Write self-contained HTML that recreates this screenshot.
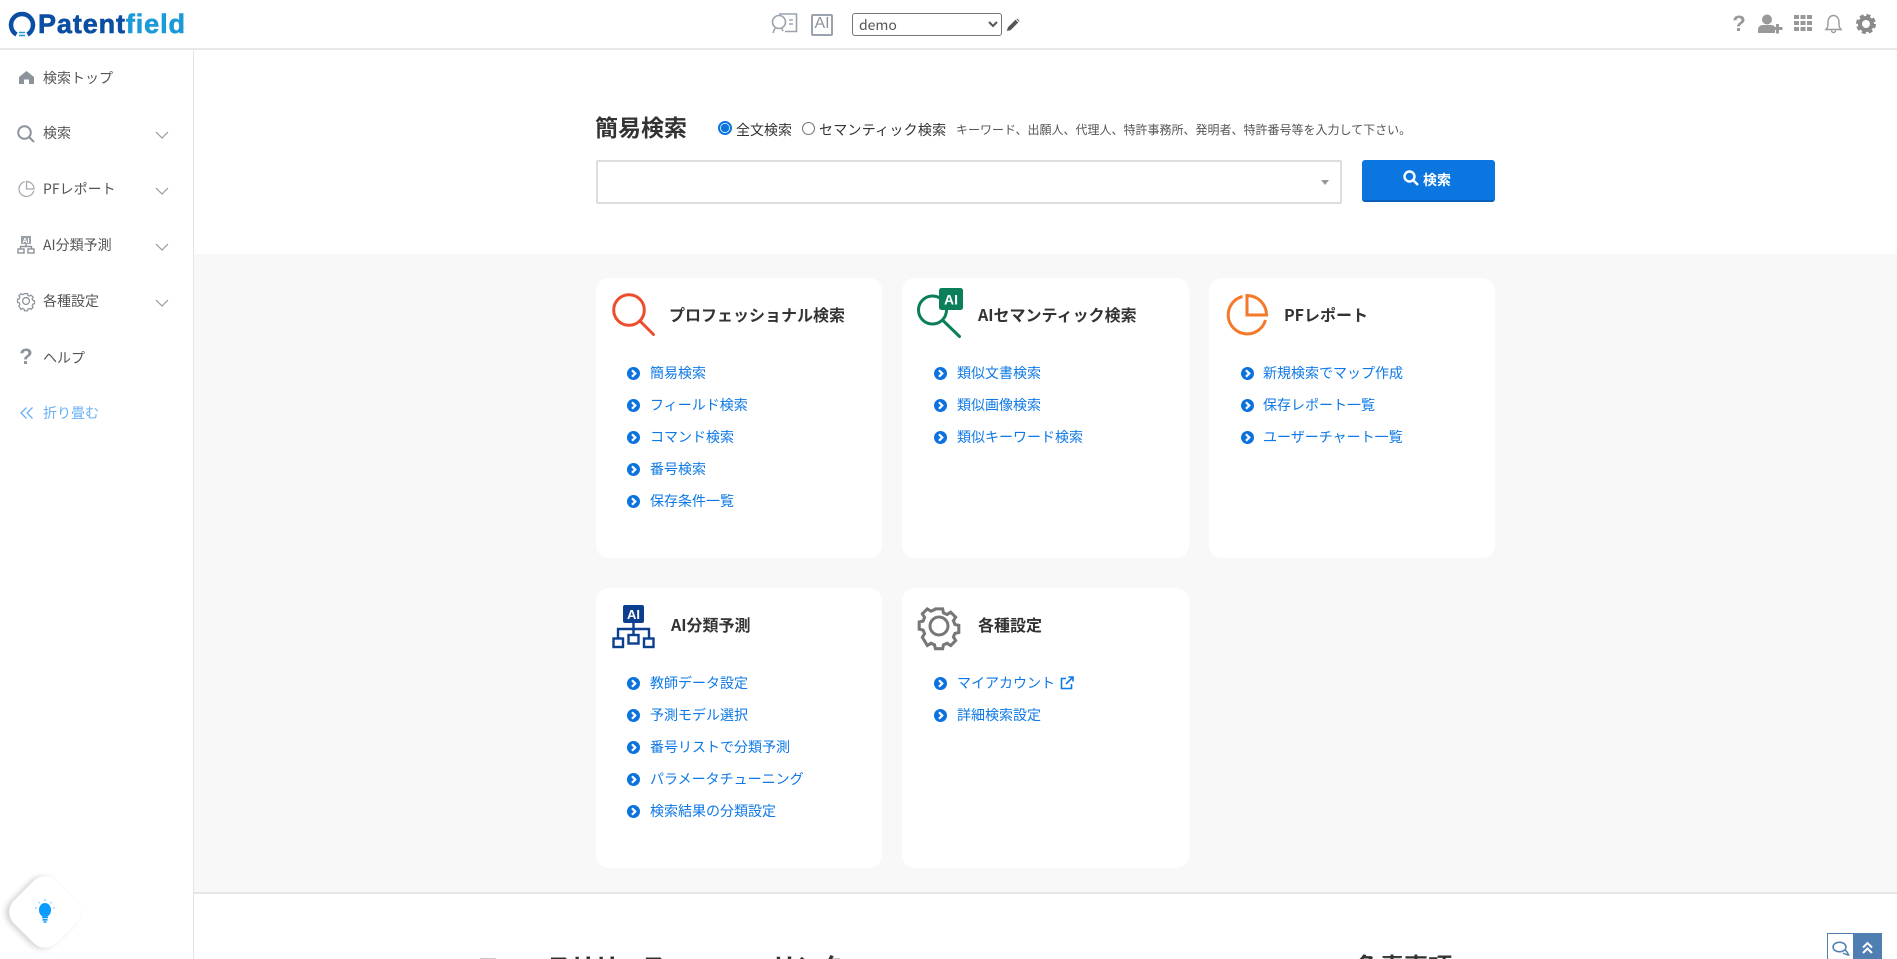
<!DOCTYPE html>
<html lang="ja">
<head>
<meta charset="utf-8">
<title>Patentfield</title>
<style>
html,body{margin:0;padding:0;width:1897px;height:959px;overflow:hidden;background:#fff}
body{position:relative;font-family:"Noto Sans CJK JP","Liberation Sans",sans-serif;color:#333}
.a{position:absolute}
.t{position:absolute;white-space:nowrap;line-height:20px;height:20px}
.nav{font-size:14px;color:#555;left:43px}
.card{position:absolute;background:#fff;border-radius:13px;width:286px;height:280px}
.h{font-size:16px;font-weight:700;color:#333}
.l{font-size:14px;color:#0d78e6}
svg{position:absolute;overflow:visible}
svg[width="12"]{width:13px;height:13px;margin:-.5px 0 0 -.5px}
</style>
</head>
<body>
<svg width="0" height="0" style="position:absolute">
<symbol id="b" viewBox="0 0 12 12"><circle cx="6" cy="6" r="6" fill="#0b72de"/><path d="M4.6 3l3 3-3 3" fill="none" stroke="#fff" stroke-width="2.1"/></symbol>
<symbol id="c" viewBox="0 0 14 8"><path d="M1 1l6 6 6-6" fill="none" stroke="#999" stroke-width="1.2"/></symbol>
</svg>

<!-- header -->
<div class="a" style="left:0;top:48px;width:1897px;height:2px;background:#e8e8e8"></div>
<svg style="left:8px;top:10px" width="28" height="28" viewBox="0 0 28 28">
<path d="M8.5 24.5A11 11 0 1 1 19.5 24.5" fill="none" stroke="#0b4ea2" stroke-width="4.5"/>
<path d="M11 22.5h6M11 25.500h6" stroke="#1a9ad8" stroke-width="1.4"/>
</svg>
<svg style="left:38px;top:8px" width="150" height="32" viewBox="0 0 150 32">
<text x="0" y="25" font-family="Liberation Sans" font-weight="700" font-size="27" textLength="147" lengthAdjust="spacing" fill="#0b4ea2" stroke-width=".6"><tspan fill="#0b4ea2" stroke="#0b4ea2">Patent</tspan><tspan fill="#1a9ad8" stroke="#1a9ad8">field</tspan></text>
</svg>

<svg style="left:771px;top:12px" width="27" height="23" viewBox="0 0 27 23" fill="none" stroke="#9aa3ad" stroke-width="1.6">
<path d="M8 2H25.500V19.500H14"/><circle cx="8" cy="10" r="6.500"/><path d="M4 16l-2 5M10.500 16l1.500 3"/><path d="M18 8h4M18 12h4"/>
</svg>
<div class="a" style="left:811px;top:14px;width:18px;height:18px;border:2px solid #9aa3ad;border-radius:2px"></div>
<div class="t" style="left:811px;top:13px;width:22px;text-align:center;font:16px/22px 'Liberation Sans',sans-serif;color:#8b939c">AI</div>
<select class="a" style="left:852px;top:13px;width:150px;height:23px;font:14px 'Noto Sans CJK JP','Liberation Sans',sans-serif;color:#555;background:#fff;border:1px solid #767676;border-radius:3px;padding:0 0 0 2px">
<option>demo</option>
</select>
<svg style="left:1006px;top:18px" width="14" height="14" viewBox="0 0 14 14"><path d="M1 13l.7-3.500L9.500 1.700l2.800 2.800-7.800 7.800zM10.300 1l.8-.5 2.400 2.400-.5.800z" fill="#555"/></svg>

<!-- header right -->
<div class="t" style="left:1731px;top:12px;width:16px;height:24px;font:700 22px/24px 'Liberation Sans',sans-serif;color:#999;text-align:center">?</div>
<svg style="left:1758px;top:14px" width="25" height="20" viewBox="0 0 25 20" fill="#999">
<circle cx="9" cy="5.500" r="5"/><path d="M0 19v-3c0-4 3-5 5-5h8c1.500 0 3 .7 4 2v6z"/><path d="M14.500 14.500h10M19.500 10v9.500" stroke="#999" stroke-width="3"/>
</svg>
<svg style="left:1794px;top:15px" width="18" height="16" viewBox="0 0 18 16" fill="#999">
<rect width="5" height="4"/><rect x="6.500" width="5" height="4"/><rect x="13" width="5" height="4"/>
<rect y="6" width="5" height="4"/><rect x="6.500" y="6" width="5" height="4"/><rect x="13" y="6" width="5" height="4"/>
<rect y="12" width="5" height="4"/><rect x="6.500" y="12" width="5" height="4"/><rect x="13" y="12" width="5" height="4"/>
</svg>
<svg style="left:1825px;top:14px" width="17" height="20" viewBox="0 0 17 20" fill="none" stroke="#999" stroke-width="1.400">
<path d="M1 15.500c2-2 2-4 2-7C3 4 5.500 1.500 8.500 1.500S14 4 14 8.500c0 3 0 5 2 7z"/><path d="M6.500 16.500a2 2 0 0 0 4 0"/>
</svg>
<svg style="left:1856px;top:14px" width="20" height="20" viewBox="0 0 20 20">
<circle cx="10" cy="10" r="6" fill="none" stroke="#8a8a8a" stroke-width="4"/>
<circle cx="10" cy="10" r="8.500" fill="none" stroke="#8a8a8a" stroke-width="3" stroke-dasharray="4 2.700"/>
</svg>

<!-- sidebar -->
<div class="a" style="left:193px;top:50px;width:1px;height:909px;background:#e4e4e4"></div>
<svg style="left:19px;top:71px" width="15" height="13" viewBox="0 0 15 13"><path d="M7.500 0L15 6v7H10V8.500H5V13H0V6z" fill="#8c939b"/></svg>
<div class="t nav" style="top:68px">検索トップ</div>
<svg style="left:17px;top:125px" width="18" height="18" viewBox="0 0 18 18" fill="none" stroke="#8c939b" stroke-width="2"><circle cx="7.500" cy="7.500" r="6.300"/><path d="M12 12l5 5"/></svg>
<div class="t nav" style="top:123px">検索</div>
<svg style="left:155px;top:131px" width="14" height="8"><use href="#c"/></svg>
<svg style="left:18px;top:180px" width="17" height="18" viewBox="0 0 17 18" fill="none" stroke="#a2a7ad" stroke-width="1.200"><path d="M6.700 1.700A7.500 7.500 0 1 0 15.800 10.800"/><path d="M8.500 1.500A7.500 7.500 0 0 1 16 9H8.500z"/></svg>
<div class="t nav" style="top:179px">PFレポート</div>
<svg style="left:155px;top:187px" width="14" height="8"><use href="#c"/></svg>
<svg style="left:17px;top:236px" width="18" height="18" viewBox="0 0 18 18" fill="none" stroke="#8c939b" stroke-width="1.400"><rect x="4" y="0" width="10" height="8" fill="#9aa0a6" stroke="none"/><text x="9" y="7" text-anchor="middle" font-family="Liberation Sans" font-weight="700" font-size="7" fill="#fff" stroke="none">AI</text><path d="M9 8v2.500M3.500 13v-2.500h11V13"/><rect x="1" y="13" width="6" height="4"/><rect x="11" y="13" width="6" height="4"/></svg>
<div class="t nav" style="top:235px">AI分類予測</div>
<svg style="left:155px;top:243px" width="14" height="8"><use href="#c"/></svg>
<svg style="left:17px;top:292px" width="18" height="18" viewBox="0 0 42 42" fill="none" stroke="#8c939b">
<circle cx="21" cy="21" r="8" stroke-width="3"/>
<path d="M17 2h8l1 4.500 4 1.700 4-2.500 5.500 5.500-2.500 4 1.700 4 4.300 1v8l-4.300 1-1.700 4 2.500 4-5.500 5.500-4-2.500-4 1.700-1 4.300h-8l-1-4.300-4-1.700-4 2.500L2.500 33.500l2.500-4-1.700-4L-1 24.500v-8l4.300-1 1.700-4-2.500-4L8 2l4 2.500 4-1.700z" stroke-width="3.200" transform="translate(2.100 2.100) scale(.9)"/>
</svg>
<div class="t nav" style="top:291px">各種設定</div>
<svg style="left:155px;top:299px" width="14" height="8"><use href="#c"/></svg>
<div class="t" style="left:18px;top:345px;width:16px;height:24px;font:700 22px/24px 'Liberation Sans',sans-serif;color:#8c939b;text-align:center">?</div>
<div class="t nav" style="top:348px">ヘルプ</div>
<svg style="left:20px;top:407px" width="13" height="12" viewBox="0 0 13 12" fill="none" stroke="#6ab0f5" stroke-width="1.300"><path d="M6.500 .5L1 6l5.500 5.500M12.500 .5L7 6l5.500 5.500"/></svg>
<div class="t nav" style="top:403px;color:#6ab0f5">折り畳む</div>

<!-- floating -->
<div class="a" style="left:15px;top:882px;width:60px;height:60px;border-radius:16px;background:#fff;transform:rotate(45deg);box-shadow:-2px 3px 6px rgba(0,0,0,.18)"></div>
<svg style="left:35px;top:899px" width="20" height="25" viewBox="0 0 20 25">
<ellipse cx="10" cy="11" rx="6" ry="7" fill="#0a9bff"/><path d="M7 18.500h6M7.500 20.800h5M8.500 23h3" stroke="#0a9bff" stroke-width="1.600"/>
<path d="M10 0v2M3.500 3l1 1.500M16.500 3l-1 1.500M0 9h2M18 9h2" stroke="#6cc2ff" stroke-width="1"/>
</svg>

<!-- search -->
<div class="t" style="left:595px;top:112px;height:28px;line-height:28px;font-size:23px;font-weight:700;color:#333">簡易検索</div>
<div class="a" style="left:718px;top:121px;width:10px;height:10px;border:2px solid #0b76e0;border-radius:50%;background:#fff"></div>
<div class="a" style="left:720px;top:123px;width:10px;height:10px;border-radius:50%;background:#0b76e0;transform:scale(.85)"></div>
<div class="t" style="left:736px;top:120px;font-size:14px;color:#333">全文検索</div>
<div class="a" style="left:802px;top:122px;width:11px;height:11px;border:1px solid #767676;border-radius:50%;background:#fff"></div>
<div class="t" style="left:819px;top:120px;font-size:14px;color:#333;letter-spacing:.25px">セマンティック検索</div>
<div class="t" style="left:956px;top:120px;font-size:12px;color:#555">キーワード、出願人、代理人、特許事務所、発明者、特許番号等を入力して下さい。</div>
<div class="a" style="left:596px;top:160px;width:742px;height:40px;border:2px solid #ddd;border-radius:2px;background:#fff"></div>
<div class="a" style="left:1321px;top:180px;width:0;height:0;border-left:4px solid transparent;border-right:4px solid transparent;border-top:5px solid #999"></div>
<div class="a" style="left:1362px;top:160px;width:133px;height:40px;background:#0b76e0;border-bottom:2px solid #0760b8;border-radius:3px"></div>
<svg style="left:1403px;top:170px" width="16" height="16" viewBox="0 0 16 16" fill="none" stroke="#fff" stroke-width="2.400"><circle cx="6.500" cy="6.500" r="5"/><path d="M10 10l5 5"/></svg>
<div class="t" style="left:1423px;top:170px;font-size:14px;font-weight:700;color:#fff">検索</div>

<!-- gray band -->
<div class="a" style="left:194px;top:254px;width:1703px;height:638px;background:#f8f8f8"></div>
<div class="a" style="left:194px;top:892px;width:1703px;height:2px;background:#e6e6e6"></div>

<div class="card" style="left:596px;top:278px"></div>
<div class="card" style="left:902px;top:278px;width:287px"></div>
<div class="card" style="left:1209px;top:278px"></div>
<div class="card" style="left:596px;top:588px"></div>
<div class="card" style="left:902px;top:588px;width:287px"></div>

<!-- card 1 -->
<svg style="left:612px;top:293px" width="44" height="46" viewBox="0 0 44 46" fill="none" stroke="#ee4d2d" stroke-width="3"><circle cx="17" cy="17" r="15.300"/><path d="M28 28l13.500 13.500" stroke-linecap="round"/></svg>
<div class="t h" style="left:669px;top:304px">プロフェッショナル検索</div>
<svg style="left:627px;top:367px" width="12" height="12"><use href="#b"/></svg><div class="t l" style="left:650px;top:363px">簡易検索</div>
<svg style="left:627px;top:399px" width="12" height="12"><use href="#b"/></svg><div class="t l" style="left:650px;top:395px">フィールド検索</div>
<svg style="left:627px;top:431px" width="12" height="12"><use href="#b"/></svg><div class="t l" style="left:650px;top:427px">コマンド検索</div>
<svg style="left:627px;top:463px" width="12" height="12"><use href="#b"/></svg><div class="t l" style="left:650px;top:459px">番号検索</div>
<svg style="left:627px;top:495px" width="12" height="12"><use href="#b"/></svg><div class="t l" style="left:650px;top:491px">保存条件一覧</div>

<!-- card 2 -->
<svg style="left:918px;top:287px" width="48" height="52" viewBox="0 0 48 52" fill="none">
<circle cx="14.500" cy="23" r="14" stroke="#0b7f5c" stroke-width="3"/><path d="M26 34.500L41.500 49.500" stroke="#0b7f5c" stroke-width="3" stroke-linecap="round"/>
<rect x="21" y="1" width="24" height="22" rx="2.500" fill="#0b7f5c"/>
<text x="33" y="17.500" text-anchor="middle" font-family="Liberation Sans" font-weight="700" font-size="14" fill="#fff">AI</text>
</svg>
<div class="t h" style="left:978px;top:304px">AIセマンティック検索</div>
<svg style="left:934px;top:367px" width="12" height="12"><use href="#b"/></svg><div class="t l" style="left:957px;top:363px">類似文書検索</div>
<svg style="left:934px;top:399px" width="12" height="12"><use href="#b"/></svg><div class="t l" style="left:957px;top:395px">類似画像検索</div>
<svg style="left:934px;top:431px" width="12" height="12"><use href="#b"/></svg><div class="t l" style="left:957px;top:427px">類似キーワード検索</div>

<!-- card 3 -->
<svg style="left:1224px;top:293px" width="44" height="44" viewBox="0 0 44 44" fill="none" stroke="#f47a2a" stroke-width="3"><path d="M18.500 3.500A19 19 0 1 0 41.500 27"/><path d="M23 2.500A19.500 19.500 0 0 1 42.500 22H23z"/></svg>
<div class="t h" style="left:1284px;top:304px">PFレポート</div>
<svg style="left:1241px;top:367px" width="12" height="12"><use href="#b"/></svg><div class="t l" style="left:1263px;top:363px">新規検索でマップ作成</div>
<svg style="left:1241px;top:399px" width="12" height="12"><use href="#b"/></svg><div class="t l" style="left:1263px;top:395px">保存レポート一覧</div>
<svg style="left:1241px;top:431px" width="12" height="12"><use href="#b"/></svg><div class="t l" style="left:1263px;top:427px">ユーザーチャート一覧</div>

<!-- card 4 -->
<svg style="left:612px;top:605px" width="43" height="44" viewBox="0 0 43 44" fill="none" stroke="#0d3f8f" stroke-width="2.400">
<rect x="11" y="0" width="21" height="18" rx="2" fill="#0d3f8f" stroke="none"/>
<text x="21.500" y="14" text-anchor="middle" font-family="Liberation Sans" font-weight="700" font-size="13" fill="#fff" stroke="none">AI</text>
<path d="M21.500 18v12M6 33v-9h31v9"/>
<rect x="1.500" y="33.500" width="9.500" height="8.500"/><rect x="16.500" y="30" width="10" height="8.500"/><rect x="32" y="33.500" width="9.500" height="8.500"/>
</svg>
<div class="t h" style="left:671px;top:614px">AI分類予測</div>
<svg style="left:627px;top:677px" width="12" height="12"><use href="#b"/></svg><div class="t l" style="left:650px;top:673px">教師データ設定</div>
<svg style="left:627px;top:709px" width="12" height="12"><use href="#b"/></svg><div class="t l" style="left:650px;top:705px">予測モデル選択</div>
<svg style="left:627px;top:741px" width="12" height="12"><use href="#b"/></svg><div class="t l" style="left:650px;top:737px">番号リストで分類予測</div>
<svg style="left:627px;top:773px" width="12" height="12"><use href="#b"/></svg><div class="t l" style="left:650px;top:769px">パラメータチューニング</div>
<svg style="left:627px;top:805px" width="12" height="12"><use href="#b"/></svg><div class="t l" style="left:650px;top:801px">検索結果の分類設定</div>

<!-- card 5 -->
<svg style="left:918px;top:605px" width="42" height="42" viewBox="0 0 42 42" fill="none" stroke="#777">
<circle cx="21" cy="21" r="9" stroke-width="3"/>
<path d="M17 2h8l1 4.500 4 1.700 4-2.500 5.500 5.500-2.500 4 1.700 4 4.300 1v8l-4.300 1-1.700 4 2.500 4-5.500 5.500-4-2.500-4 1.700-1 4.300h-8l-1-4.300-4-1.700-4 2.500L2.500 33.500l2.500-4-1.700-4L-1 24.500v-8l4.300-1 1.700-4-2.500-4L8 2l4 2.500 4-1.700z" stroke-width="3.400" transform="translate(2.100 2.100) scale(.9)"/>
</svg>
<div class="t h" style="left:978px;top:614px">各種設定</div>
<svg style="left:934px;top:677px" width="12" height="12"><use href="#b"/></svg><div class="t l" style="left:957px;top:673px">マイアカウント</div>
<svg style="left:1060px;top:676px" width="14" height="14" viewBox="0 0 14 14" fill="none" stroke="#0d78e6" stroke-width="1.600"><path d="M6 2.500H1.500v10h10V8"/><path d="M6 8l7-7M8.500 1H13v4.500"/></svg>
<svg style="left:934px;top:709px" width="12" height="12"><use href="#b"/></svg><div class="t l" style="left:957px;top:705px">詳細検索設定</div>

<!-- bottom -->
<div class="t" style="left:476px;top:947px;height:36px;line-height:36px;font-size:24px;font-weight:700;color:#333">ニュースリリース</div>
<div class="t" style="left:772px;top:947px;height:36px;line-height:36px;font-size:24px;font-weight:700;color:#333">リンク</div>
<div class="t" style="left:1356px;top:947px;height:36px;line-height:36px;font-size:24px;font-weight:700;color:#333">免責事項</div>

<div class="a" style="left:1827px;top:933px;width:25px;height:26px;border:1px solid #4f7fb2;border-bottom:0;background:#fff"></div>
<div class="a" style="left:1853px;top:933px;width:29px;height:26px;background:#4f7fb2"></div>
<svg style="left:1832px;top:941px" width="18" height="16" viewBox="0 0 18 16" fill="none" stroke="#4f7fb2" stroke-width="1.500"><ellipse cx="7.500" cy="6" rx="6.500" ry="4.800"/><path d="M13 9c1.500 1 2.500 2 3.500 5-2-.5-4-1-5.500-2"/></svg>
<svg style="left:1861px;top:941px" width="13" height="14" viewBox="0 0 13 14" fill="none" stroke="#fff" stroke-width="2"><path d="M2 6.500l4.500-4.500L11 6.500M2 12l4.500-4.500L11 12"/></svg>
</body>
</html>
